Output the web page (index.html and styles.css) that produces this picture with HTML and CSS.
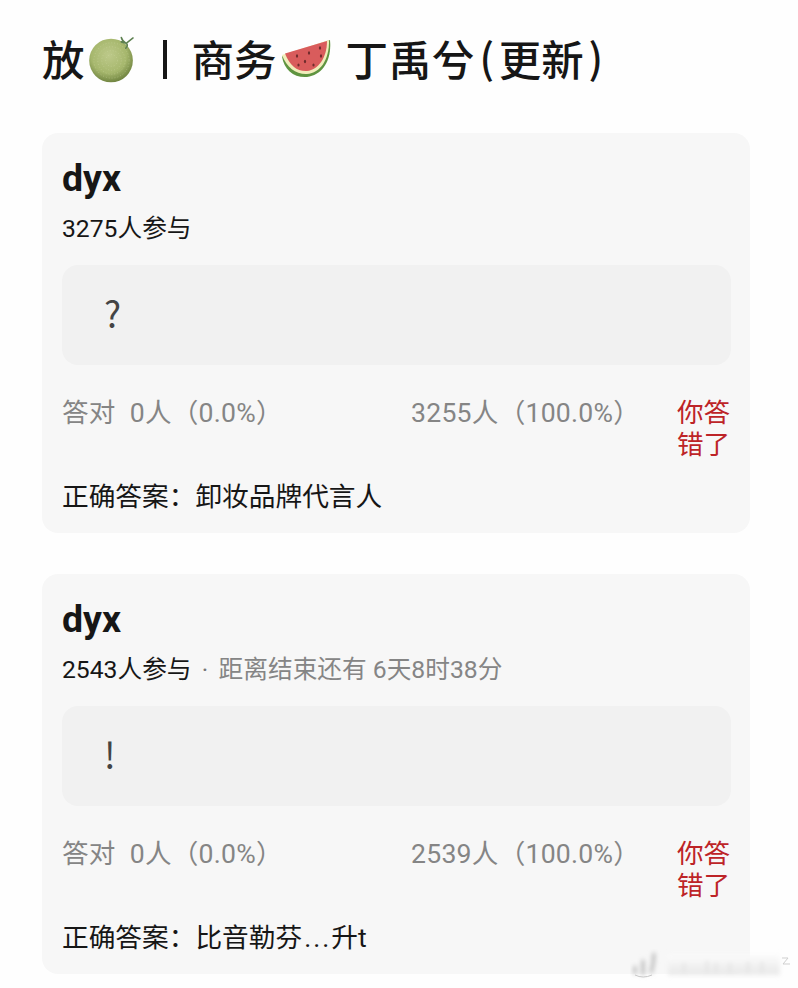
FILE: index.html
```
<!DOCTYPE html>
<html lang="zh-CN">
<head>
    <meta charset="UTF-8">
    <meta name="viewport" content="width=device-width, initial-scale=1.0">
    <title>商务 丁禹兮(更新)</title>
    <link rel="stylesheet" href="styles.css">
</head>
<body>
    <div class="page">
        <h1 class="title">
            <span>放</span>
            <svg class="icon-melon" viewBox="0 0 48 48">
                <defs>
                    <radialGradient id="melon" cx="45%" cy="38%" r="62%">
                        <stop offset="0" stop-color="#bdc98a"/>
                        <stop offset="0.65" stop-color="#a6b76d"/>
                        <stop offset="1" stop-color="#718541"/>
                    </radialGradient>
                </defs>
                <circle cx="22.500" cy="25" r="22.300" fill="url(#melon)"/>
                <g fill="none" stroke="#d3dca8" stroke-width="0.7" stroke-dasharray="1 2" opacity="0.6">
                    <circle cx="23" cy="25" r="18"/>
                    <circle cx="23" cy="25" r="14"/>
                    <circle cx="23" cy="25" r="10"/>
                    <circle cx="23" cy="25" r="6"/>
                </g>
                <path d="M33 1.500q1 4 5 6L45 2M38 7.500q2.500 2-0.500 5M33 6l5 1.500" fill="none" stroke="#5d8050" stroke-width="1.600" stroke-linecap="round"/>
            </svg>
            <span class="bar"></span>
            <span>商务</span>
            <svg class="icon-watermelon" viewBox="0 0 50 40">
                <path d="M1 17.500C3 31 13 39 26 38C41 36 51 22 49 1Z" fill="#5f9440"/>
                <path d="M1 16C6 29 15 35.500 26 35C39 34 48.500 21 48 1Z" fill="#f1edbb"/>
                <path d="M4 14.500C9 27 16 32.500 26 32C37 31 46 19 46 2Z" fill="#d95c5c"/>
                <g fill="#702c2d">
                    <ellipse cx="16" cy="17" rx="1.100" ry="1.700"/>
                    <ellipse cx="28" cy="14" rx="1.100" ry="1.700"/>
                    <ellipse cx="39" cy="9" rx="1.100" ry="1.700"/>
                    <ellipse cx="17.500" cy="26" rx="1.100" ry="1.500"/>
                    <ellipse cx="24" cy="22.500" rx="1.100" ry="1.700"/>
                    <ellipse cx="32.500" cy="26" rx="1.100" ry="1.500"/>
                    <ellipse cx="40" cy="17" rx="1.100" ry="1.700"/>
                </g>
            </svg>
            <span class="name">丁禹兮</span>
            <span class="paren">(</span>
            <span>更新</span>
            <span class="paren">)</span>
        </h1>

        <div class="card">
            <h2 class="card-name">dyx</h2>
            <p class="card-meta">3275人参与</p>
            <div class="question">?</div>
            <div class="stats">
                <span class="stat-right"><span>答对</span><span>0人（0.0%）</span></span>
                <span class="stat-wrong">3255人（100.0%）</span>
                <span class="result">你答错了</span>
            </div>
            <p class="answer">正确答案：卸妆品牌代言人</p>
        </div>

        <div class="card">
            <h2 class="card-name">dyx</h2>
            <p class="card-meta">2543人参与<span class="dot">·</span><span class="deadline">距离结束还有 6天8时38分</span></p>
            <div class="question">!</div>
            <div class="stats">
                <span class="stat-right"><span>答对</span><span>0人（0.0%）</span></span>
                <span class="stat-wrong">2539人（100.0%）</span>
                <span class="result">你答错了</span>
            </div>
            <p class="answer">正确答案：比音勒芬<span class="ellipsis">...</span>升t</p>
        </div>
    </div>

    <!-- faded watermark -->
    <svg class="watermark" viewBox="0 0 168 36">
        <defs>
            <filter id="soft" x="-10%" y="-30%" width="120%" height="160%"><feGaussianBlur stdDeviation="2 2.500"/></filter>
            <linearGradient id="smear" x1="0" y1="0" x2="0" y2="1">
                <stop offset="0" stop-color="#fcfcfc"/>
                <stop offset="1" stop-color="#e8e8e8"/>
            </linearGradient>
        </defs>
        <g filter="url(#soft)">
            <rect x="38" y="6" width="112" height="20" fill="url(#smear)"/>
            <path d="M5 17v8M13 11v15M24 4q0 10-3 20" stroke="#c4c4c4" stroke-width="4" fill="none"/>
            <path d="M54 14v10M77 12v12M86 14v10M100 14v10M118 13v11M132 13v11" stroke="#e4e4e4" stroke-width="3"/>
        </g>
        <path d="M5 26q8 4 17 0" fill="none" stroke="#c8c8c8"/>
        <path d="M152 9h6l-5 6h7" fill="none" stroke="#cfcfcf"/>
    </svg>
</body>
</html>
```
FILE: styles.css
```
* {
    box-sizing: border-box;
}

body {
    margin: 0;
    height: 988px;
    overflow: hidden;
    background: #fefefe;
    color: #161616;
    font-family: Roboto, "Noto Sans CJK SC", sans-serif;
}

h1, h2, p {
    margin: 0;
}

.page {
    padding: 29px 48px 0 42px;
}

/* Title */
.title {
    display: flex;
    align-items: center;
    height: 60px;
    margin-bottom: 44px;
    font-family: "Noto Sans CJK SC", sans-serif;
    font-size: 42.5px;
    font-weight: 500;
    line-height: 58px;
    white-space: nowrap;
}

.title > span {
    padding-bottom: 2px;
}

.icon-melon {
    width: 47px;
    height: 47px;
    margin-left: 4px;
}

.title > .bar {
    width: 4px;
    height: 39px;
    margin: 0 25px 0 27px;
    padding: 0;
    background: #161616;
}

.icon-watermelon {
    width: 50px;
    height: 40px;
    margin: 0 15px 0 4px;
}

.name {
    letter-spacing: 0.6px;
}

.title > .paren {
    width: 24px;
    padding-bottom: 6px;
    font-size: 41px;
    text-align: center;
}

/* Quiz cards */
.card {
    height: 400px;
    margin-bottom: 41px;
    padding: 23px 19px 18px 20px;
    border-radius: 16px;
    background: #f7f7f7;
}

.card-name {
    font-size: 37.5px;
    font-weight: 700;
    line-height: 45px;
}

.card-meta {
    margin-top: 12px;
    font-size: 24.7px;
    line-height: 32px;
    white-space: nowrap;
}

.dot {
    display: inline-block;
    width: 27px;
    text-align: center;
    color: #777;
}

.deadline {
    color: #858585;
}

.question {
    height: 100px;
    margin-top: 20px;
    padding-left: 42px;
    border-radius: 16px;
    background: #f1f1f1;
    color: #444;
    font-family: "Noto Sans CJK SC", sans-serif;
    font-size: 36px;
    line-height: 94px;
}

.stats {
    display: grid;
    grid-template-columns: 349px 266px 54px;
    margin-top: 32px;
    color: #858585;
    font-size: 26.6px;
    line-height: 32px;
}

.stat-right {
    display: flex;
    gap: 14px;
}

.stat-right,
.stat-wrong {
    letter-spacing: 0.25px;
}

.result {
    color: #bd2427;
}

.answer {
    margin-top: 20px;
    font-size: 26.7px;
    line-height: 32px;
}

.ellipsis {
    margin-left: 2px;
    letter-spacing: 2px;
}

.watermark {
    position: absolute;
    left: 630px;
    top: 949px;
    width: 168px;
    height: 36px;
}
```
